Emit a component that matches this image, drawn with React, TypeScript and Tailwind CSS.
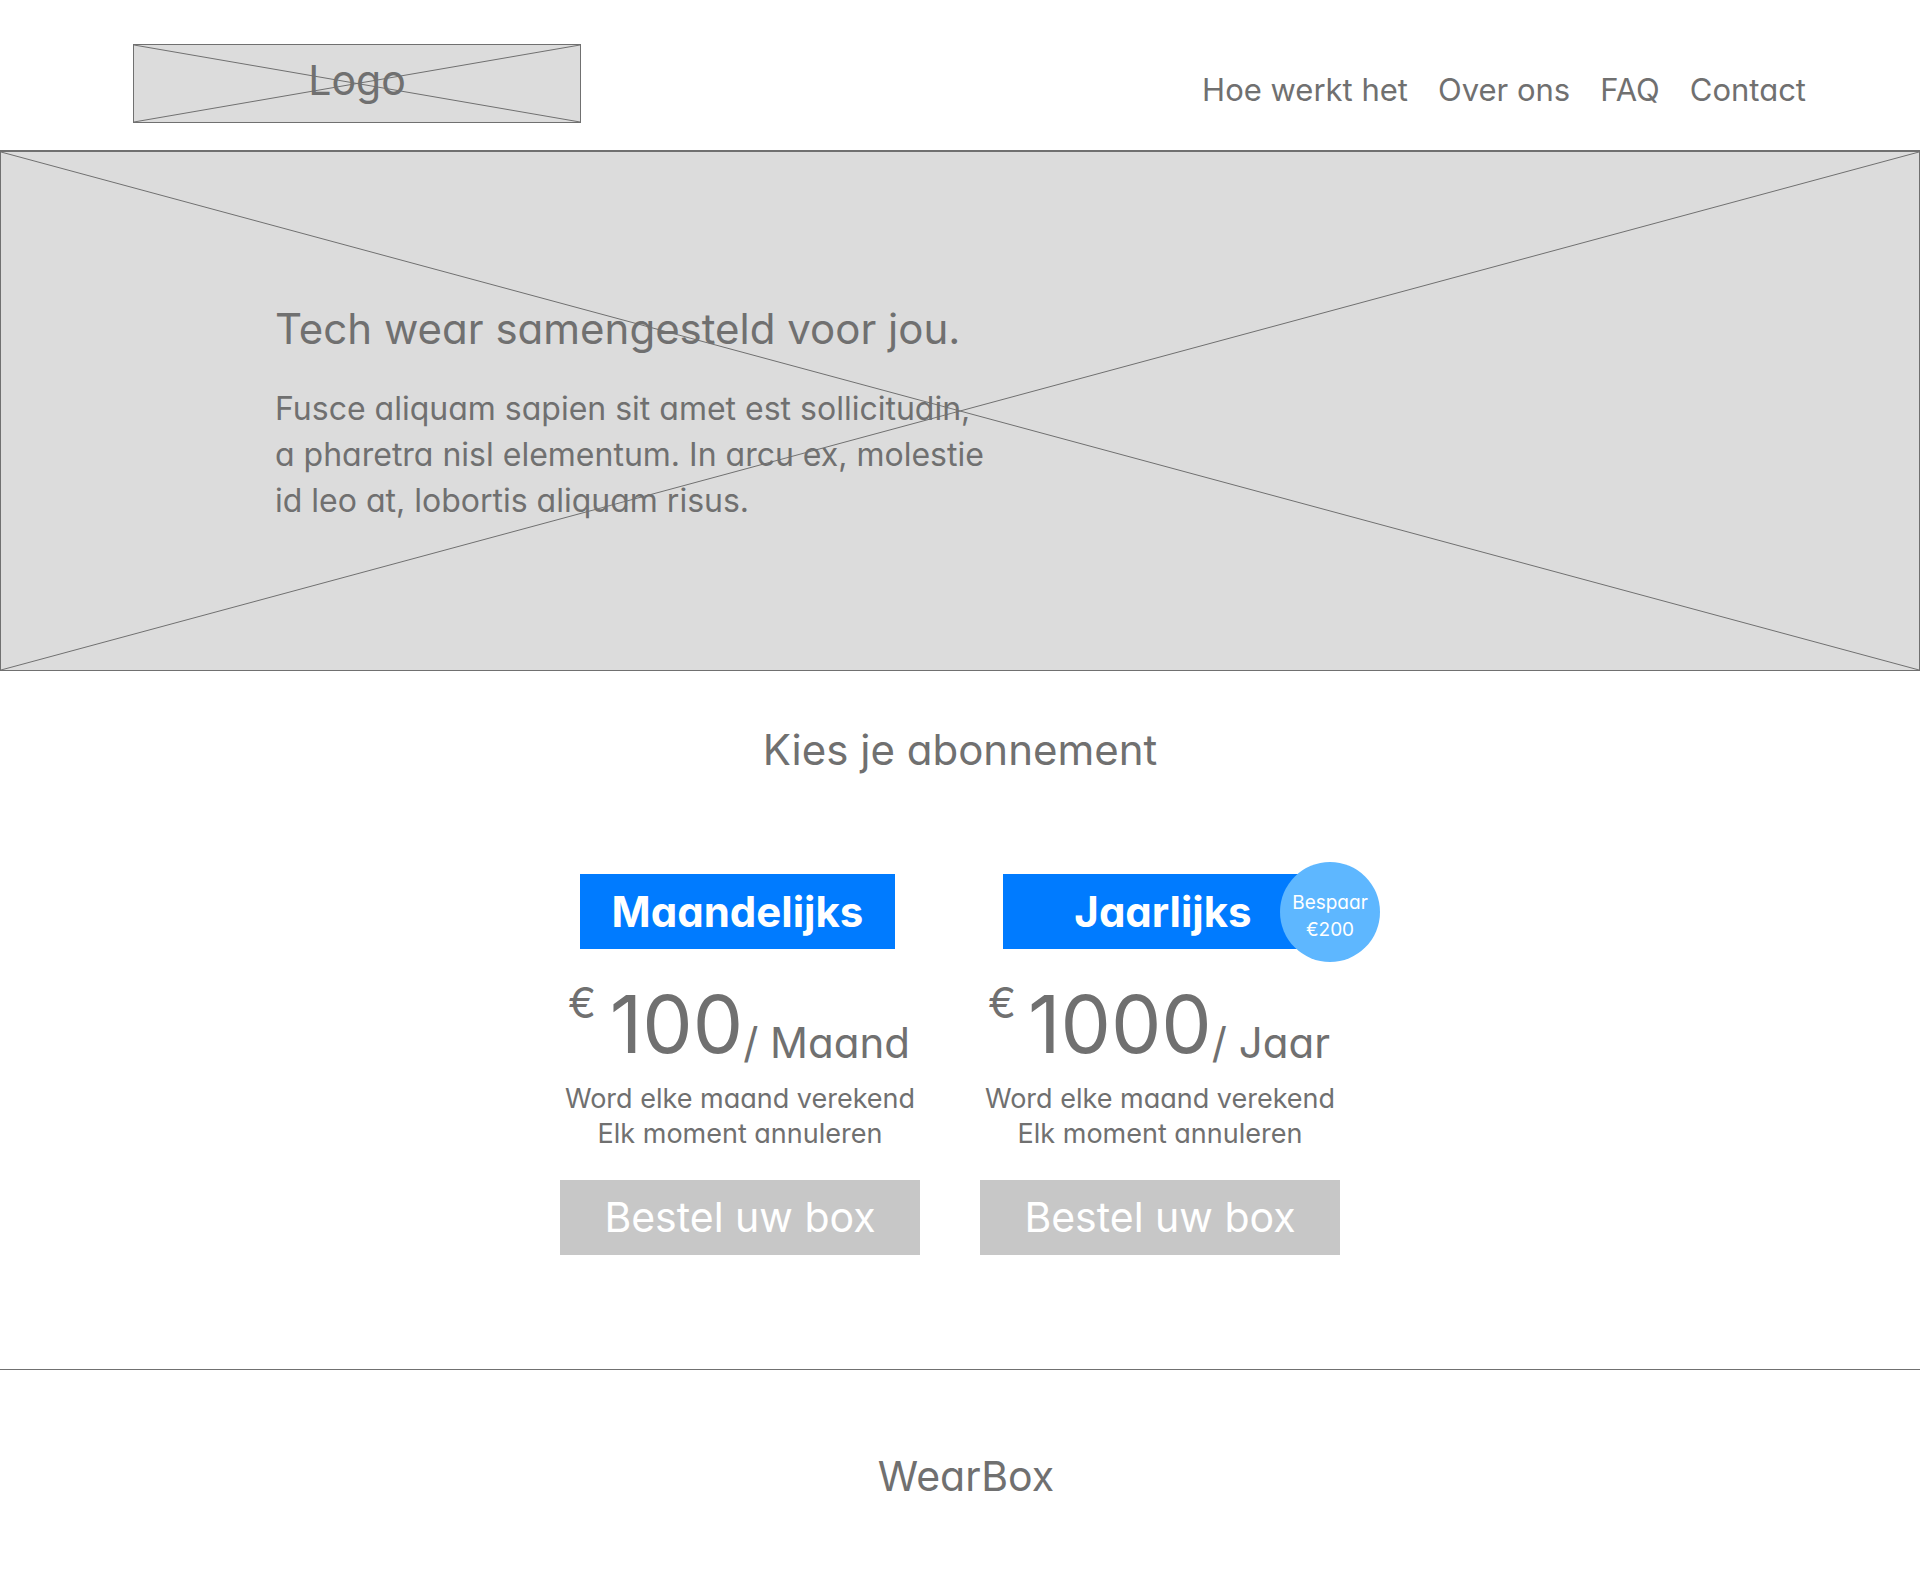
type Plan = {
  name: string;
  price: string;
  period: string;
  badge?: [string, string];
};

const plans: Plan[] = [
  { name: "Maandelijks", price: "100", period: "/ Maand" },
  { name: "Jaarlijks", price: "1000", period: "/ Jaar", badge: ["Bespaar", "€200"] },
];

const links = ["Hoe werkt het", "Over ons", "FAQ", "Contact"];

/* Diagonals of a wireframe image placeholder, stretched over its parent. */
function Cross() {
  return (
    <svg className="absolute inset-0 size-full" preserveAspectRatio="none" viewBox="0 0 100 100" aria-hidden="true">
      <path d="M0 0L100 100M0 100L100 0" fill="none" stroke="#707070" strokeWidth="1" vectorEffect="non-scaling-stroke" />
    </svg>
  );
}

function PlanCard({ plan }: { plan: Plan }) {
  return (
    <article className="flex w-[360px] flex-col">
      <div className={plan.badge ? "relative ml-[23px] w-[320px]" : "relative ml-5 w-[315px]"}>
        <h3 className="bg-[#007bff] text-center text-[42px] leading-[75px] font-bold text-white">{plan.name}</h3>
        {plan.badge && (
          <p className="absolute -top-3 left-[277px] flex size-[100px] flex-col items-center justify-center rounded-full bg-[#5eb7ff] pt-2 text-[19px] leading-[27px] text-white">
            <span>{plan.badge[0]}</span>
            <span>{plan.badge[1]}</span>
          </p>
        )}
      </div>
      <p className="mt-6 flex pr-2.5 pl-2 leading-[60px]">
        <span className="text-[42px]">€</span>
        <span className="mt-[21px] ml-auto text-[80px]">{plan.price}</span>
        <span className="mt-10 text-[42px]">{plan.period}</span>
      </p>
      <p className="mt-2 text-center text-[27px] leading-[35px]">
        Word elke maand verekend
        <br />
        Elk moment annuleren
      </p>
      <button type="button" className="mt-[29px] bg-[#c7c7c7] text-[41px] leading-[75px] text-white">
        Bestel uw box
      </button>
    </article>
  );
}

export default function App() {
  return (
    <div className="bg-white font-['Inter',sans-serif] text-[#707070] [font-feature-settings:'cv11']">
      <header className="flex items-start justify-between border-b border-[#707070] pt-11 pr-[114px] pb-[27px] pl-[133px]">
        <a href="#" className="relative flex h-[79px] w-[448px] justify-center border border-[#707070] bg-[#dcdcdc]">
          <Cross />
          <span className="relative text-[41px] leading-[70px]">Logo</span>
        </a>
        <nav className="mt-6 flex gap-[30px] text-[31px] leading-[44px]">
          {links.map((link) => (
            <a key={link} href="#">
              {link}
            </a>
          ))}
        </nav>
      </header>
      <main>
        <section className="relative border border-[#707070] bg-[#dcdcdc] px-[274px] pt-[147px] pb-[146px]">
          <Cross />
          <div className="relative">
            <h1 className="text-[42px] leading-[60px]">Tech wear samengesteld voor jou.</h1>
            <p className="mt-[27px] text-[32px] leading-[46px]">
              Fusce aliquam sapien sit amet est sollicitudin,
              <br />
              a pharetra nisl elementum. In arcu ex, molestie
              <br />
              id leo at, lobortis aliquam risus.
            </p>
          </div>
        </section>
        <section className="pt-[49px] pb-[114px]">
          <h2 className="text-center text-[42px] leading-[60px]">Kies je abonnement</h2>
          <div className="mt-[94px] flex justify-center gap-[60px] pr-5">
            {plans.map((plan) => (
              <PlanCard key={plan.name} plan={plan} />
            ))}
          </div>
        </section>
      </main>
      <footer className="border-t border-[#707070] pt-[76px] pb-16 pl-3 text-center text-[41px] leading-[60px]">WearBox</footer>
    </div>
  );
}
